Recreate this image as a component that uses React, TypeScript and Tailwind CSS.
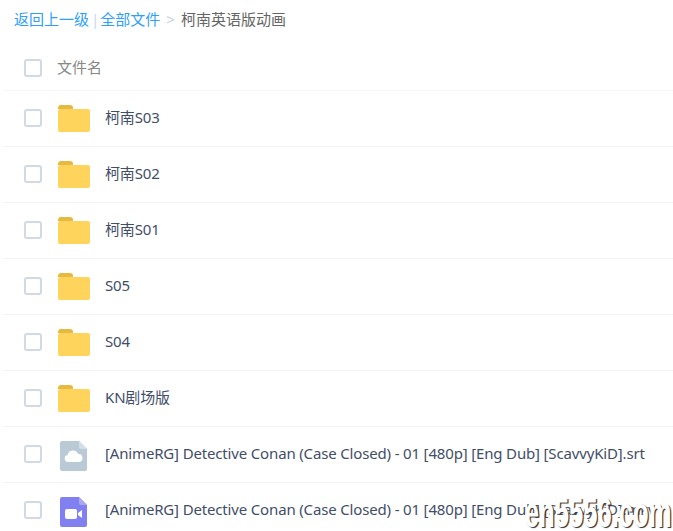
const rows = [
  { name: '柯南S03', type: 'folder' },
  { name: '柯南S02', type: 'folder' },
  { name: '柯南S01', type: 'folder' },
  { name: 'S05', type: 'folder' },
  { name: 'S04', type: 'folder' },
  { name: 'KN剧场版', type: 'folder' },
  { name: '[AnimeRG] Detective Conan (Case Closed) - 01 [480p] [Eng Dub] [ScavvyKiD].srt', type: 'srt' },
  { name: '[AnimeRG] Detective Conan (Case Closed) - 01 [480p] [Eng Dub] [ScavvyKiD].mkv', type: 'video' },
]

function Checkbox() {
  return <span className="h-[18px] w-[18px] shrink-0 rounded-[3px] border-2 border-[#d0d9e4] bg-white" />
}

function FolderIcon() {
  return (
    <svg width="32" height="27" viewBox="0 0 32 27" className="shrink-0">
      <path d="M0 3a3 3 0 0 1 3-3h9a3 3 0 0 1 3 3v1H0z" fill="#e9b93f" />
      <path d="M0 6a2 2 0 0 1 2-2h28a2 2 0 0 1 2 2v19a2 2 0 0 1-2 2H2a2 2 0 0 1-2-2z" fill="#ffd45c" />
    </svg>
  )
}

function SrtIcon() {
  return (
    <svg width="27" height="30" viewBox="0 0 27 30" className="shrink-0">
      <path d="M2 0h17l8 8v20a2 2 0 0 1-2 2H2a2 2 0 0 1-2-2V2a2 2 0 0 1 2-2z" fill="#b9c9d6" />
      <path d="M19 0l8 8h-6a2 2 0 0 1-2-2z" fill="#d3dee6" />
      <path d="M8 21a3.6 3.6 0 0 1-.5-7.1 5.6 5.6 0 0 1 10.7-.9 4 4 0 0 1 .5 8z" fill="#fff" />
    </svg>
  )
}

function VideoIcon() {
  return (
    <svg width="27" height="30" viewBox="0 0 27 30" className="shrink-0">
      <path d="M2 0h17l8 8v20a2 2 0 0 1-2 2H2a2 2 0 0 1-2-2V2a2 2 0 0 1 2-2z" fill="#8180f0" />
      <path d="M19 0l8 8h-6a2 2 0 0 1-2-2z" fill="#a9a8f6" />
      <rect x="5" y="12" width="12" height="10" rx="2" fill="#fff" />
      <path d="M18 16l4-3v8l-4-3z" fill="#fff" />
    </svg>
  )
}

export default function App() {
  return (
    <div className="relative h-[531px] w-[673px] overflow-hidden bg-white font-['Noto_Sans','Noto_Sans_CJK_SC',sans-serif] text-[15px]">
      <div className="flex h-[38px] items-center pl-[14px]">
        <span className="text-[#2ea0fa]">返回上一级</span>
        <span className="mx-[2px] text-[#c5d9ee]">|</span>
        <span className="-ml-[1px] text-[#2ea0fa]">全部文件</span>
        <span className="mx-[6px] text-[#c5d0dc]">&gt;</span>
        <span className="text-[#666]">柯南英语版动画</span>
      </div>

      <div className="ml-[4px]">
        <div className="flex h-[53px] items-center border-b border-[#f4f6f9] pl-[20px] pt-[7px]">
          <Checkbox />
          <span className="mb-[1px] ml-[15px] text-[#888]">文件名</span>
        </div>
        {rows.map((row) => (
          <div key={row.name} className="flex h-[56px] items-center border-b border-[#f1f5fa] pl-[20px]">
            <span className="mb-[2px] flex">
              <Checkbox />
            </span>
            <span className={`flex w-[63px] justify-center px-[1px] ${row.type === 'folder' ? 'mt-[0px]' : 'mt-[2px]'}`}>
              {row.type === 'folder' && <FolderIcon />}
              {row.type === 'srt' && <SrtIcon />}
              {row.type === 'video' && <VideoIcon />}
            </span>
            <span className="mb-[2px] whitespace-nowrap tracking-[-0.16px] text-[#424e67]">{row.name}</span>
          </div>
        ))}
      </div>

      <div className="absolute bottom-[-3px] right-[2px] origin-right scale-x-[0.61] font-['Liberation_Sans',sans-serif] text-[42px] font-bold leading-none text-white [text-shadow:2px_1px_1px_#333]">
        en5556.com
      </div>
    </div>
  )
}
